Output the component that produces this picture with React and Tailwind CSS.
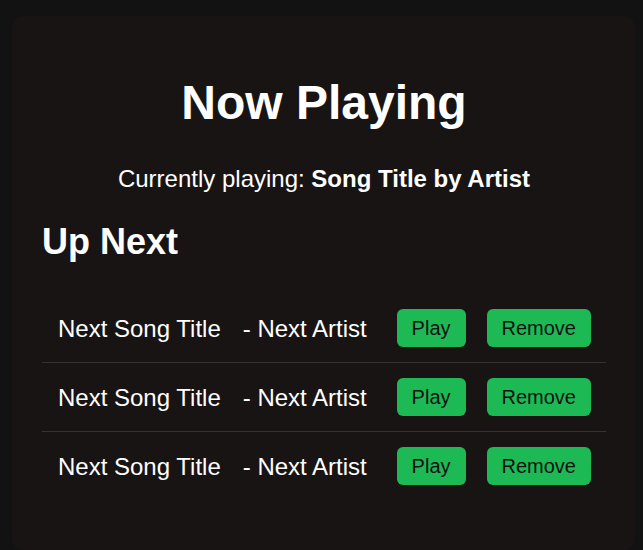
const queue = [
  { title: "Next Song Title", artist: "Next Artist" },
  { title: "Next Song Title", artist: "Next Artist" },
  { title: "Next Song Title", artist: "Next Artist" },
];

const QueueItem = ({ song }) => {
  return (
    <li className="flex justify-between items-center pl-[16px] pr-[15px] py-[15px] border-b border-[#333333] last:border-b-0">
      <div className="flex items-center gap-[22px] text-[24px] leading-[27px]">
        <span>{song.title}</span>
        <span>- {song.artist}</span>
      </div>
      <div className="flex items-center gap-[21px]">
        <button className="bg-[#1db954] text-[#111111] text-[20px] leading-[24px] px-[15px] py-[7px] rounded-[6px]">
          Play
        </button>
        <button className="bg-[#1db954] text-[#111111] text-[20px] leading-[24px] px-[15px] py-[7px] rounded-[6px]">
          Remove
        </button>
      </div>
    </li>
  );
};

export default function App() {
  return (
    <div
      className="min-h-[550px] bg-[#121212] pt-[16px] pl-[12px]"
      style={{ fontFamily: '"Liberation Sans", Arial, sans-serif' }}
    >
      <div className="w-[623px] bg-[#181414] rounded-[12px] pl-[30px] pr-[29px] pt-[30px] pb-[30px] text-white">
        <h1 className="mt-[30px] text-center text-[48px] leading-[54px] font-bold">
          Now Playing
        </h1>
        <p className="mt-[35px] text-center text-[24px] leading-[27px]">
          Currently playing: <strong className="font-bold">Song Title by Artist</strong>
        </p>
        <h2 className="mt-[29px] text-[36px] leading-[41px] font-bold">Up Next</h2>
        <ul className="mt-[32px] mb-[20px]">
          {queue.map((song, i) => (
            <QueueItem key={i} song={song} />
          ))}
        </ul>
      </div>
    </div>
  );
}
